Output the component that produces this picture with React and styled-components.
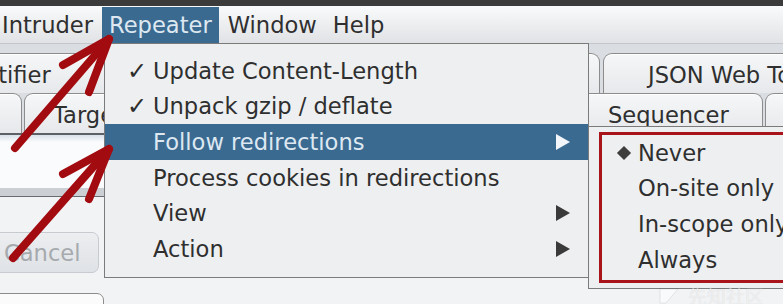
import React from "react";
import styled, { createGlobalStyle } from "styled-components";

const GlobalStyle = createGlobalStyle`
  html, body { margin: 0; padding: 0; }
  body {
    width: 783px; height: 304px; overflow: hidden;
    background: #f4f5f6;
    font-family: "DejaVu Sans", "Noto Sans", sans-serif;
  }
  * { box-sizing: border-box; }
`;

const Screen = styled.div`
  position: relative;
  width: 783px;
  height: 304px;
  overflow: hidden;
  display: flex;
  flex-direction: column;
  font-family: "DejaVu Sans", "Noto Sans", sans-serif;
  font-size: 22.6px;
  color: #2f2f2f;
  background: #f4f5f6;
`;

const TitleStrip = styled.div`
  flex: none;
  height: 6px;
  background: #3b3b3b;
`;

const MenuBar = styled.div`
  flex: none;
  height: 38px;
  display: flex;
  gap: 2px;
  background: linear-gradient(#f9fafb, #e0e2e5);
  border-bottom: 1px solid #c3c6ca;
  & > :first-child { margin-left: -5px; }
`;

const MenuTitle = styled.div`
  display: flex;
  align-items: center;
  padding: 0 7px;
  margin-top: 1px;
  white-space: nowrap;
  background: ${(p) => (p.$active ? "#3b6a91" : "transparent")};
  color: ${(p) => (p.$active ? "#dde8f1" : "#2f2f2f")};
`;

const AppBody = styled.div`
  flex: 1;
  display: flex;
  flex-direction: column;
  padding-top: 9px;
  background: #dadde1;
`;

const TabRow = styled.div`
  flex: none;
  display: flex;
  gap: ${(p) => p.$gap}px;
  height: 40px;
  margin-left: ${(p) => p.$offset}px;
`;

const Tab = styled.div`
  flex: none;
  width: ${(p) => p.$w}px;
  height: 40px;
  display: flex;
  align-items: center;
  justify-content: ${(p) => (p.$pad != null ? "flex-start" : "center")};
  padding-left: ${(p) => (p.$pad != null ? p.$pad : 0)}px;
  padding-top: 2px;
  white-space: nowrap;
  overflow: hidden;
  border: 1px solid #8c8c8c;
  border-bottom: none;
  border-radius: 9px 9px 0 0;
  background: linear-gradient(#f6f7f8, #e6e8eb);
  box-shadow: inset 0 1px 0 #ffffff;
`;

const ContentFrame = styled.div`
  flex: none;
  height: 55px;
  border-top: 2px solid #5d6065;
  background: linear-gradient(#d9e1ea 0, #fafbfc 7px);
`;

const Divider = styled.div`
  flex: none;
  height: 9px;
  background: #ccd0d5;
  border-bottom: 1px solid #686b70;
`;

const ButtonPanel = styled.div`
  flex: 1;
  display: flex;
  flex-direction: column;
  align-items: flex-start;
  gap: 20px;
  padding-top: 35px;
  background: #f2f3f5;
`;

const PanelButton = styled.div`
  flex: none;
  width: ${(p) => p.$w}px;
  height: 41px;
  margin-left: -20px;
  display: flex;
  align-items: center;
  padding-left: 23px;
  border-radius: 7px;
  border: 1px solid ${(p) => (p.$disabled ? "#c7cacf" : "#8d8d8d")};
  background: ${(p) =>
    p.$disabled ? "linear-gradient(#eceef0, #dfe2e6)" : "#fbfbfb"};
  color: ${(p) => (p.$disabled ? "#a6aaae" : "#2f2f2f")};
`;

const Dropdown = styled.div`
  position: absolute;
  left: 104px;
  top: 43px;
  width: 485px;
  border: 1px solid #7b7b7b;
  background: #eeeff1;
  padding: 9px 0 10px;
`;

const MenuRow = styled.div`
  height: 35.6px;
  display: grid;
  grid-template-columns: 25px 1fr 14px;
  align-items: center;
  padding: 0 18px 0 23px;
  white-space: nowrap;
  background: ${(p) => (p.$active ? "#3b6a91" : "transparent")};
  color: ${(p) => (p.$active ? "#dde8f1" : "#2f2f2f")};
`;

const Check = styled.span`
  font-size: 24px;
  line-height: 1;
  color: #2c2c2c;
  margin-left: -1px;
`;

const SubArrow = styled.svg`
  width: 14px;
  height: 16px;
  display: block;
  fill: ${(p) => (p.$light ? "#f2f6fa" : "#3a3a3a")};
`;

const SubMenu = styled.div`
  position: absolute;
  left: 588px;
  top: 126px;
  width: 260px;
  border: 1px solid #7b7b7b;
  background: #eeeff1;
  padding: 8px 0 11px;
`;

const SubRow = styled.div`
  height: 35.6px;
  display: grid;
  grid-template-columns: 28px 1fr;
  align-items: center;
  padding-left: 21px;
  white-space: nowrap;
`;

const Diamond = styled.span`
  justify-self: center;
  width: 10px;
  height: 10px;
  background: #3d3d3d;
  transform: rotate(45deg);
`;

const RedBox = styled.div`
  position: absolute;
  left: 599px;
  top: 132px;
  width: 220px;
  height: 151px;
  border: 3px solid #a8141a;
  pointer-events: none;
`;

const Annotations = styled.svg`
  position: absolute;
  left: 0;
  top: 0;
  width: 783px;
  height: 304px;
  pointer-events: none;
`;

const Watermark = styled.div`
  position: absolute;
  left: 658px;
  top: 282px;
  display: flex;
  align-items: center;
  gap: 8px;
  font-family: "Noto Sans CJK SC", sans-serif;
  font-size: 19px;
  color: rgba(255, 255, 255, 0.55);
  text-shadow: 0 0 1px rgba(0, 0, 0, 0.12);
  pointer-events: none;
`;

const Arrow = ({ light }) => (
  <SubArrow $light={light} viewBox="0 0 14 16">
    <polygon points="0,0 14,8 0,16" />
  </SubArrow>
);

const Pointer = ({ x1, y1, x2, y2, b1, b2 }) => (
  <g stroke="#a20c10" strokeWidth="8" strokeLinecap="round" strokeLinejoin="round" fill="none">
    <line x1={x1} y1={y1} x2={x2} y2={y2} />
    <polyline points={`${b1[0]},${b1[1]} ${x2},${y2} ${b2[0]},${b2[1]}`} />
  </g>
);

const menuItems = [
  { check: true, label: "Update Content-Length" },
  { check: true, label: "Unpack gzip / deflate" },
  { label: "Follow redirections", sub: true, active: true },
  { label: "Process cookies in redirections" },
  { label: "View", sub: true },
  { label: "Action", sub: true },
];

const subItems = [
  { label: "Never", selected: true },
  { label: "On-site only" },
  { label: "In-scope only" },
  { label: "Always" },
];

export default function App() {
  return (
    <>
      <GlobalStyle />
      <Screen>
        <TitleStrip />
        <MenuBar>
          <MenuTitle>Intruder</MenuTitle>
          <MenuTitle $active>Repeater</MenuTitle>
          <MenuTitle>Window</MenuTitle>
          <MenuTitle>Help</MenuTitle>
        </MenuBar>
        <AppBody>
          <TabRow $offset={-60} $gap={3}>
            <Tab $w={190} $pad={8}>Identifier</Tab>
            <Tab $w={147}>Autorize</Tab>
            <Tab $w={137}>Logger++</Tab>
            <Tab $w={177}>Param Miner</Tab>
            <Tab $w={320} $pad={44}>JSON Web Tokens</Tab>
          </TabRow>
          <TabRow $offset={-178} $gap={2}>
            <Tab $w={200}>Dashboard</Tab>
            <Tab $w={132} $pad={28}>Target</Tab>
            <Tab $w={132}>Proxy</Tab>
            <Tab $w={148}>Intruder</Tab>
            <Tab $w={130}>Repeater</Tab>
            <Tab $w={189} $pad={33}>Sequencer</Tab>
            <Tab $w={140}>Decoder</Tab>
          </TabRow>
          <ContentFrame />
          <Divider />
          <ButtonPanel>
            <PanelButton $w={119} $disabled>Cancel</PanelButton>
            <PanelButton $w={124}>Send</PanelButton>
          </ButtonPanel>
        </AppBody>

        <Dropdown>
          {menuItems.map((m) => (
            <MenuRow key={m.label} $active={m.active}>
              <Check>{m.check ? "✓" : ""}</Check>
              <span>{m.label}</span>
              {m.sub ? <Arrow light={m.active} /> : <span />}
            </MenuRow>
          ))}
        </Dropdown>

        <SubMenu>
          {subItems.map((s) => (
            <SubRow key={s.label}>
              {s.selected ? <Diamond /> : <span />}
              <span>{s.label}</span>
            </SubRow>
          ))}
        </SubMenu>

        <RedBox />

        <Annotations viewBox="0 0 783 304">
          <Pointer x1={15} y1={148} x2={109} y2={39} b1={[63, 65]} b2={[89, 92]} />
          <Pointer x1={13} y1={258} x2={109} y2={149} b1={[63, 174]} b2={[89, 199]} />
        </Annotations>

        <Watermark>
          <svg width="22" height="18" viewBox="0 0 22 18">
            <path d="M2 2 H20 L8 16 H2 Z" fill="rgba(255,255,255,0.55)" stroke="rgba(0,0,0,0.08)" />
          </svg>
          <span>先知社区</span>
        </Watermark>
      </Screen>
    </>
  );
}
